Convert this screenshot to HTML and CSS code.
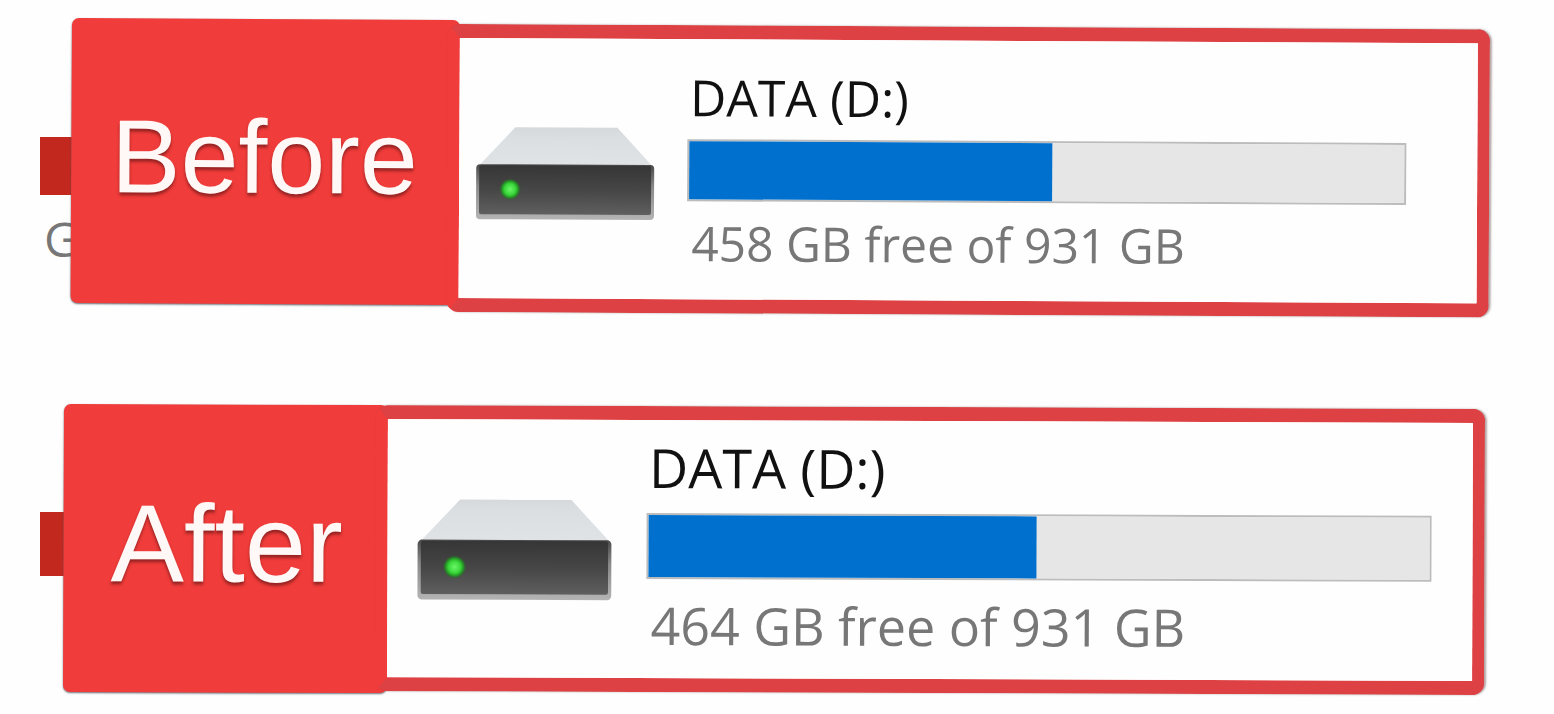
FILE: index.html
```
<!DOCTYPE html>
<html lang="en">
  <head>
    <meta charset="UTF-8" />
    <meta name="viewport" content="width=device-width, initial-scale=1.0" />
    <title>Drive space: before and after</title>
    <link rel="stylesheet" href="styles.css">
  </head>
  <body>
    <!-- shared gradients for the drive icons -->
    <svg class="icon-defs" width="0" height="0" aria-hidden="true">
      <defs>
        <linearGradient id="drive-top" x1="0" y1="0" x2="0" y2="1">
          <stop offset="0" stop-color="#d6d9dc" />
          <stop offset="0.3" stop-color="#dbdfe2" />
          <stop offset="1" stop-color="#dfe3e6" />
        </linearGradient>
        <linearGradient id="drive-front" x1="0" y1="0" x2="0" y2="1">
          <stop offset="0" stop-color="#363636" />
          <stop offset="0.5" stop-color="#464646" />
          <stop offset="1" stop-color="#5f5f5f" />
        </linearGradient>
        <linearGradient id="drive-edge" x1="0" y1="0" x2="0" y2="1">
          <stop offset="0" stop-color="#4a4a4a" />
          <stop offset="0.4" stop-color="#8a8a8a" />
          <stop offset="1" stop-color="#b4b4b4" />
        </linearGradient>
        <radialGradient id="drive-led">
          <stop offset="0" stop-color="#6cf56a" />
          <stop offset="0.5" stop-color="#3ad83a" />
          <stop offset="0.75" stop-color="#259425" />
          <stop offset="1" stop-color="#2c5a2c" stop-opacity="0" />
        </radialGradient>
        <symbol id="drive" viewBox="0 0 180 94">
          <path d="M40 1H142L177 39H4Z" fill="url(#drive-top)" />
          <rect x="1" y="38" width="178" height="55" rx="4" fill="url(#drive-edge)" />
          <rect x="4" y="39" width="172" height="49" rx="2" fill="url(#drive-front)" />
          <circle cx="35" cy="63" r="11" fill="url(#drive-led)" />
        </symbol>
      </defs>
    </svg>

    <main class="comparison">
      <section class="row row-before">
        <div class="behind">
          <div class="behind-bar"></div>
          <span class="behind-text">G</span>
        </div>
        <div class="card">
          <h2 class="card-label">Before</h2>
          <div class="drive">
            <svg class="drive-icon" viewBox="0 0 180 94" aria-hidden="true"><use href="#drive" /></svg>
            <div class="drive-info">
              <label class="drive-name" for="space-before">DATA (D:)</label>
              <progress class="drive-bar" id="space-before" value="50.8" max="100"></progress>
              <p class="drive-free">458 GB free of 931 GB</p>
            </div>
          </div>
        </div>
      </section>

      <section class="row row-after">
        <div class="behind">
          <div class="behind-bar"></div>
        </div>
        <div class="card">
          <h2 class="card-label">After</h2>
          <div class="drive">
            <svg class="drive-icon" viewBox="0 0 180 94" aria-hidden="true"><use href="#drive" /></svg>
            <div class="drive-info">
              <label class="drive-name" for="space-after">DATA (D:)</label>
              <progress class="drive-bar" id="space-after" value="49.6" max="100"></progress>
              <p class="drive-free">464 GB free of 931 GB</p>
            </div>
          </div>
        </div>
      </section>
    </main>
  </body>
</html>
```
FILE: styles.css
```
* {
  box-sizing: border-box;
  margin: 0;
  padding: 0;
}

body {
  background-color: #fefefe;
  font-family: 'Open Sans', 'Noto Sans', sans-serif;
}

.icon-defs {
  position: absolute;
}

.comparison {
  display: flex;
  flex-direction: column;
  gap: 94px;
  padding: 18px 64px 20px 40px;
}

.row {
  display: flex;
}

/* bits of the window that stick out behind the card */
.behind {
  flex: none;
  width: 32px;
  padding-top: 119px;
}

.behind-bar {
  height: 58px;
  background-color: #c3281f;
}

.behind-text {
  display: block;
  margin-top: 16px;
  padding-left: 4px;
  color: #777;
  font-size: 48px;
  line-height: 56px;
}

.card {
  flex: 1;
  display: flex;
  transform: rotate(0.3deg);
  transform-origin: left top;
}

.card-label {
  flex: none;
  display: flex;
  align-items: center;
  margin-bottom: 7px;
  padding: 0 42px 10px 40px;
  border-radius: 7px;
  background-color: #f03c3a;
  box-shadow: 0 1px 2px rgba(70, 80, 90, 0.8);
  color: #fff8f6;
  font-family: 'Liberation Sans', Arial, sans-serif;
  font-size: 104px;
  font-weight: normal;
  line-height: 120px;
  text-shadow: 0 3px 3px rgba(90, 20, 20, 0.6);
}

.drive {
  flex: 1;
  display: flex;
  align-items: center;
  gap: 32px;
  margin-top: 4px;
  margin-left: -12px;
  padding: 30px 71px 28px 16px;
  border: solid #de4143;
  border-width: 14px 12px;
  border-left-color: #f03c3a;
  border-radius: 12px;
  background-color: #fefefe;
  box-shadow: 2px 0 2px rgba(110, 80, 80, 0.5);
}

.drive-icon {
  flex: none;
  width: 180px;
  margin-top: 8px;
}

.drive-info {
  flex: 1;
  display: flex;
  flex-direction: column;
  gap: 14px;
  font-size: 48px;
  line-height: 56px;
}

.drive-name {
  padding-left: 2px;
  color: #111;
  font-size: 50px;
}

.drive-free {
  padding-left: 4px;
  color: #777;
}

.drive-bar {
  -webkit-appearance: none;
  appearance: none;
  display: block;
  width: 100%;
  height: 62px;
  border: 2px solid #bcbcbc;
  background-color: #e6e6e6;
}

.drive-bar::-webkit-progress-bar {
  background-color: #e6e6e6;
}

.drive-bar::-webkit-progress-value {
  background-color: #0070cf;
}

.row-after {
  padding-right: 5px;
}

.row-after .behind {
  width: 24px;
  padding-top: 108px;
}

.row-after .behind-bar {
  height: 64px;
}

.row-after .card {
  transform: rotate(0.2deg);
}

.row-after .card-label {
  margin-bottom: 0;
  padding: 0 45px 10px 47px;
  font-size: 110px;
}

.row-after .drive {
  gap: 34px;
  margin-top: 0;
  margin-bottom: 2px;
  padding: 17px 41px 23px 29px;
}

.row-after .drive-icon {
  width: 196px;
}

.row-after .drive-info {
  gap: 16px;
  font-size: 52px;
  line-height: 60px;
}

.row-after .drive-name {
  font-size: 54px;
}

.row-after .drive-bar {
  height: 66px;
}
```
